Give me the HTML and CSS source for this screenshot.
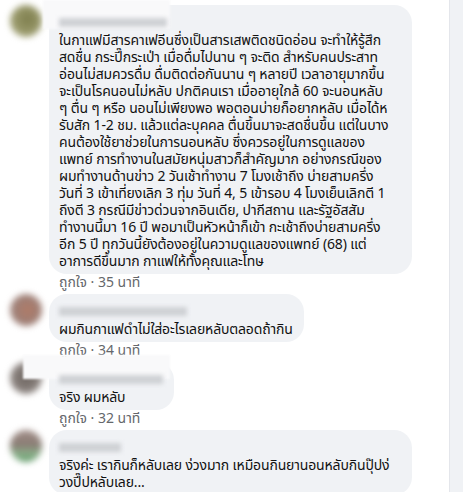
FILE: index.html
```html
<!DOCTYPE html>
<html lang="th">
<head>
  <meta charset="UTF-8" />
  <meta name="viewport" content="width=device-width, initial-scale=1" />
  <title>ความคิดเห็น</title>
  <link rel="stylesheet" href="styles.css">
</head>
<body>

<div class="page">
  <main class="thread">

    <div class="comment">
      <div class="avatar avatar-1"></div>
      <div class="body">
        <span class="patch patch-1"></span>
        <div class="bubble bubble-wide">
          <div class="name"><span class="name-blur" style="width: 108px"></span></div>
          <p class="text">ในกาแฟมีสารคาเฟอีนซึ่งเป็นสารเสพติดชนิดอ่อน จะทำให้รู้สึก<br>สดชื่น กระปี๊กระเป่า เมื่อดื่มไปนาน ๆ จะติด สำหรับคนประสาท<br>อ่อนไม่สมควรดื่ม ดื่มติดต่อกันนาน ๆ หลายปี เวลาอายุมากขึ้น<br>จะเป็นโรคนอนไม่หลับ ปกติคนเรา เมื่ออายุใกล้ 60 จะนอนหลับ<br>ๆ ตื่น ๆ หรือ นอนไม่เพียงพอ พอตอนบ่ายก็อยากหลับ เมื่อได้ห<br>รับสัก 1-2 ชม. แล้วแต่ละบุคคล ตื่นขึ้นมาจะสดชื่นขึ้น แต่ในบาง<br>คนต้องใช้ยาช่วยในการนอนหลับ ซึ่งควรอยู่ในการดูแลของ<br>แพทย์ การทำงานในสมัยหนุ่มสาวก็สำคัญมาก อย่างกรณีของ<br>ผมทำงานด้านข่าว 2 วันเช้าทำงาน 7 โมงเช้าถึง บ่ายสามครึ่ง<br>วันที่ 3 เข้าเที่ยงเลิก 3 ทุ่ม วันที่ 4, 5 เข้ารอบ 4 โมงเย็นเลิกตี 1<br>ถึงตี 3 กรณีมีข่าวด่วนจากอินเดีย, ปากีสถาน และรัฐอัสสัม<br>ทำงานนี้มา 16 ปี พอมาเป็นหัวหน้าก็เข้า กะเช้าถึงบ่ายสามครึ่ง<br>อีก 5 ปี ทุกวันนี้ยังต้องอยู่ในความดูแลของแพทย์ (68) แต่<br>อาการดีขึ้นมาก กาแฟให้ทั้งคุณและโทษ</p>
        </div>
        <div class="meta">ถูกใจ · 35 นาที</div>
      </div>
    </div>

    <div class="comment">
      <div class="avatar avatar-2"></div>
      <div class="body">
        <div class="bubble">
          <div class="name"><span class="name-blur" style="width: 128px"></span></div>
          <p class="text">ผมกินกาแฟดำไม่ใส่อะไรเลยหลับตลอดถ้ากิน</p>
        </div>
        <div class="meta">ถูกใจ · 34 นาที</div>
      </div>
    </div>

    <div class="comment">
      <div class="avatar avatar-3"></div>
      <div class="body">
        <span class="patch patch-3"></span>
        <div class="bubble">
          <div class="name"><span class="name-blur" style="width: 104px"></span></div>
          <p class="text">จริง ผมหลับ</p>
        </div>
        <div class="meta">ถูกใจ · 32 นาที</div>
      </div>
    </div>

    <div class="comment">
      <div class="avatar avatar-4"></div>
      <div class="body">
        <div class="bubble bubble-wide">
          <div class="name"><span class="name-blur" style="width: 62px"></span></div>
          <p class="text">จริงค่ะ เรากินก็หลับเลย ง่วงมาก เหมือนกินยานอนหลับกินปุ๊ปง่<br>วงปี๊ปหลับเลย...</p>
        </div>
      </div>
    </div>

  </main>
  <aside class="rail"></aside>
</div>

</body>
</html>
```

FILE: styles.css
```css
body {
  margin: 0;
  background: #fff;
  font-family: "Noto Sans Thai", "Noto Sans", "DejaVu Sans", sans-serif;
  color: #1c1e21;
  overflow: hidden;
}
.page {
  display: flex;
  height: 492px;
}
.thread {
  width: 449px;
  padding: 5px 0 0 10px;
  box-sizing: border-box;
}
.rail {
  flex: 1;
  background: #f0f2f5;
  border-left: 1px solid #e4e6eb;
}
.comment {
  display: flex;
  align-items: flex-start;
  gap: 7px;
}
.avatar {
  width: 32px;
  height: 32px;
  border-radius: 50%;
  flex-shrink: 0;
  filter: blur(3px);
}
.avatar-1 {
  background: radial-gradient(circle at 55% 45%, #7d7d4c 0%, #9a9a6c 55%, #c4c4a6 100%);
}
.avatar-2 {
  background: radial-gradient(circle at 55% 50%, #b07a66 0%, #9d8078 60%, #cbbcb6 100%);
}
.avatar-3 {
  background: radial-gradient(circle at 50% 50%, #6d6560 0%, #8c8480 60%, #c9c4c1 100%);
}
.avatar-4 {
  background: linear-gradient(#a3908a 0%, #8a7b74 45%, #8ab08a 75%, #5f9a68 100%);
}
.body {
  position: relative;
  display: flex;
  flex-direction: column;
  align-items: flex-start;
  min-width: 0;
}
.bubble {
  background: #f0f2f5;
  border-radius: 18px;
  padding: 8px 11px 4px 10px;
}
.bubble-wide {
  width: 342px;
}
.name {
  position: relative;
  z-index: 1;
  height: 19px;
  display: flex;
  align-items: center;
}
.name-blur {
  display: block;
  height: 9px;
  background: #cfd1d5;
  filter: blur(2px);
}
.text {
  margin: 0;
  font-size: 14px;
  line-height: 17px;
  letter-spacing: -0.15px;
  white-space: nowrap;
  color: #111;
}
.meta {
  font-size: 14px;
  line-height: 16px;
  color: #65676b;
  padding: 1px 0 0 10px;
  margin-bottom: 3px;
}
.patch {
  position: absolute;
  background: #f9f9fa;
  filter: blur(1px);
}
.patch-1 {
  left: -6px;
  top: -5px;
  width: 127px;
  height: 29px;
}
.patch-3 {
  left: -26px;
  top: -7px;
  width: 147px;
  height: 24px;
}
```
